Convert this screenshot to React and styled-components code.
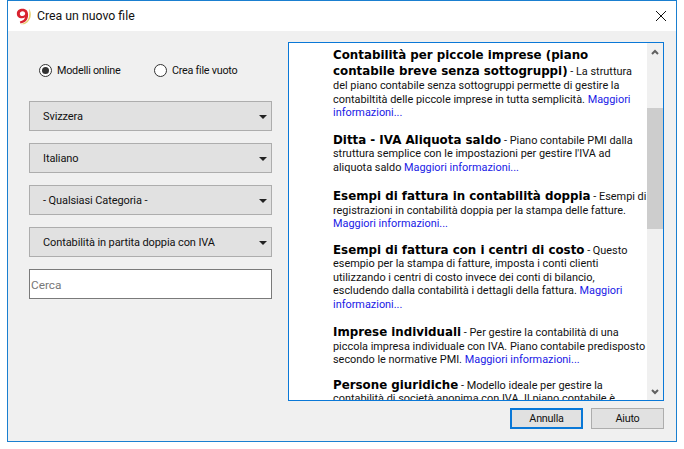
import styled, { createGlobalStyle } from 'styled-components';

const Global = createGlobalStyle`
  html, body { margin: 0; padding: 0; background: #fff; }
  body { font-family: Roboto, "Open Sans", sans-serif; }
`;

const Page = styled.div`
  width: 684px;
  height: 449px;
  padding: 0 7px 7px 7px;
  box-sizing: border-box;
  overflow: hidden;
`;

const Window = styled.div`
  width: 670px;
  height: 442px;
  box-sizing: border-box;
  border: 1px solid #1a7fd0;
  display: flex;
  flex-direction: column;
  background: #f0f0f0;
`;

const TitleBar = styled.div`
  height: 30px;
  flex: none;
  background: #fff;
  display: flex;
  align-items: center;
  padding: 0 10px 0 8px;
  gap: 4px;
  font-size: 12.3px;
  color: #111;
`;

const TitleText = styled.span`
  flex: 1;
`;

const Body = styled.div`
  flex: 1;
  display: flex;
  padding: 11px 11px 0 21px;
  gap: 16px;
  min-height: 0;
`;

const Side = styled.div`
  width: 243px;
  flex: none;
  display: flex;
  flex-direction: column;
  gap: 12px;
`;

const RadioRow = styled.div`
  height: 47px;
  flex: none;
  display: flex;
  align-items: flex-start;
  padding: 22px 0 0 10px;
  box-sizing: border-box;
`;

const RadioLabel = styled.label`
  width: ${(p) => p.$width}px;
  display: flex;
  align-items: center;
  gap: 5px;
  font-size: 10.8px;
  letter-spacing: -0.25px;
  color: #111;
`;

const RadioMark = styled.span`
  width: 13px;
  height: 13px;
  box-sizing: border-box;
  border: 1px solid #333;
  border-radius: 50%;
  background: #fff;
  display: flex;
  align-items: center;
  justify-content: center;
  &::after {
    content: '';
    width: 7px;
    height: 7px;
    border-radius: 50%;
    background: ${(p) => (p.$on ? '#333' : 'transparent')};
  }
`;

const Select = styled.div`
  height: 30px;
  box-sizing: border-box;
  background: #e1e1e1;
  border: 1px solid #adadad;
  display: flex;
  align-items: center;
  justify-content: space-between;
  padding: 1px 4px 0 13px;
  font-size: 11px;
  letter-spacing: -0.1px;
  color: #111;
`;

const Caret = styled.span`
  width: 0;
  height: 0;
  border-left: 4px solid transparent;
  border-right: 4px solid transparent;
  border-top: 4px solid #222;
`;

const SearchBox = styled.div`
  height: 30px;
  box-sizing: border-box;
  background: #fff;
  border: 1px solid #7a7a7a;
  display: flex;
  align-items: center;
  padding: 1px 0 0 1px;
  font-size: 11.8px;
  color: #777;
`;

const Right = styled.div`
  width: 376px;
  flex: none;
  display: flex;
  flex-direction: column;
  gap: 7px;
`;

const ListBox = styled.div`
  height: 359px;
  box-sizing: border-box;
  flex: none;
  border: 1px solid #0a78d7;
  background: #fff;
  display: flex;
  overflow: hidden;
`;

const ListContent = styled.div`
  flex: 1;
  padding: 4px 0 0 44px;
  overflow: hidden;
  font-size: 10.9px;
  line-height: 13.5px;
  color: #111;
`;

const Item = styled.div`
  margin-bottom: ${(p) => p.$gap}px;
  white-space: nowrap;
`;

const Heading = styled.span`
  font-family: "DejaVu Sans", Verdana, sans-serif;
  font-weight: 700;
  font-size: 11.85px;
  line-height: ${(p) => (p.$tall ? 16 : 13.5)}px;
  color: #000;
`;

const More = styled.span`
  color: #1a1ae6;
`;

const Scrollbar = styled.div`
  width: 16px;
  flex: none;
  background: #f0f0f0;
  display: flex;
  flex-direction: column;
  align-items: center;
`;

const ScrollArrow = styled.div`
  height: 17px;
  flex: none;
  display: flex;
  align-items: center;
  justify-content: center;
`;

const ScrollTrack = styled.div`
  flex: 1;
  width: 100%;
  padding-top: 48px;
  box-sizing: border-box;
`;

const ScrollThumb = styled.div`
  height: 121px;
  background: #cdcdcd;
`;

const Footer = styled.div`
  display: flex;
  justify-content: flex-end;
  gap: 8px;
`;

const Button = styled.div`
  width: 73px;
  height: 21px;
  box-sizing: border-box;
  background: #e1e1e1;
  border: ${(p) => (p.$focus ? '2px solid #0a78d7' : '1px solid #adadad')};
  display: flex;
  align-items: center;
  justify-content: center;
  font-size: 10.8px;
  letter-spacing: -0.25px;
  color: #111;
`;

const Logo = () => (
  <svg width="17" height="17" viewBox="0 0 16 16">
    <path d="M12.4.8c3 4.800 1.600 11-3.200 13.800-1.600.8-3.400 1-4.800.6 3.800-.6 7-3.200 7.800-7 .4-2.400.4-4.900.2-7.400z" fill="#e6cf6e" />
    <path d="M6.200.8C3 .8.800 2.700.800 5.300c0 2.600 2 4.400 4.700 4.400 1.200 0 2.200-.4 3-1-.4 2-2 3.300-4.900 3.900l.6 2C9 14 11.400 10.900 11.400 6.400 11.400 3 9.500.8 6.200.8zm0 2.200c1.500 0 2.400.9 2.400 2.200 0 1.300-1 2.300-2.500 2.300-1.500 0-2.500-.9-2.500-2.200C3.600 4 4.700 3 6.200 3z" fill="#d8232f" />
  </svg>
);

const CloseIcon = () => (
  <svg width="10" height="10" viewBox="0 0 10 10">
    <path d="M0 0L10 10M10 0L0 10" stroke="#111" strokeWidth="1" fill="none" />
  </svg>
);

const Chevron = ({ up }) => (
  <svg width="8" height="6" viewBox="0 0 8 6">
    <path d={up ? 'M1 5L4 2L7 5' : 'M1 1L4 4L7 1'} stroke="#606060" strokeWidth="2" fill="none" />
  </svg>
);

const selects = ['Svizzera', 'Italiano', '- Qualsiasi Categoria -', 'Contabilità in partita doppia con IVA'];

const App = () => {
  return (
    <Page>
      <Global />
      <Window>
        <TitleBar>
          <Logo />
          <TitleText>Crea un nuovo file</TitleText>
          <CloseIcon />
        </TitleBar>
        <Body>
          <Side>
            <RadioRow>
              <RadioLabel $width={115}>
                <RadioMark $on />
                Modelli online
              </RadioLabel>
              <RadioLabel $width={100}>
                <RadioMark />
                Crea file vuoto
              </RadioLabel>
            </RadioRow>
            {selects.map((s) => (
              <Select key={s}>
                {s}
                <Caret />
              </Select>
            ))}
            <SearchBox>Cerca</SearchBox>
          </Side>
          <Right>
            <ListBox>
              <ListContent>
                <Item $gap={14}>
                  <Heading $tall>Contabilità per piccole imprese (piano<br />contabile breve senza sottogruppi)</Heading> - La struttura<br />
                  del piano contabile senza sottogruppi permette di gestire la<br />
                  contabiltità delle piccole imprese in tutta semplicità. <More>Maggiori<br />informazioni...</More>
                </Item>
                <Item $gap={16}>
                  <Heading>Ditta - IVA Aliquota saldo</Heading> - Piano contabile PMI dalla<br />
                  struttura semplice con le impostazioni per gestire l'IVA ad<br />
                  aliquota saldo <More>Maggiori informazioni...</More>
                </Item>
                <Item $gap={13}>
                  <Heading>Esempi di fattura in contabilità doppia</Heading> - Esempi di<br />
                  registrazioni in contabilità doppia per la stampa delle fatture.<br />
                  <More>Maggiori informazioni...</More>
                </Item>
                <Item $gap={15}>
                  <Heading>Esempi di fattura con i centri di costo</Heading> - Questo<br />
                  esempio per la stampa di fatture, imposta i conti clienti<br />
                  utilizzando i centri di costo invece dei conti di bilancio,<br />
                  escludendo dalla contabilità i dettagli della fattura. <More>Maggiori<br />informazioni...</More>
                </Item>
                <Item $gap={12}>
                  <Heading>Imprese individuali</Heading> - Per gestire la contabilità di una<br />
                  piccola impresa individuale con IVA. Piano contabile predisposto<br />
                  secondo le normative PMI. <More>Maggiori informazioni...</More>
                </Item>
                <Item $gap={0}>
                  <Heading>Persone giuridiche</Heading> - Modello ideale per gestire la<br />
                  contabilità di società anonima con IVA. Il piano contabile è
                </Item>
              </ListContent>
              <Scrollbar>
                <ScrollArrow><Chevron up /></ScrollArrow>
                <ScrollTrack><ScrollThumb /></ScrollTrack>
                <ScrollArrow><Chevron /></ScrollArrow>
              </Scrollbar>
            </ListBox>
            <Footer>
              <Button $focus>Annulla</Button>
              <Button>Aiuto</Button>
            </Footer>
          </Right>
        </Body>
      </Window>
    </Page>
  );
};

export default App;
